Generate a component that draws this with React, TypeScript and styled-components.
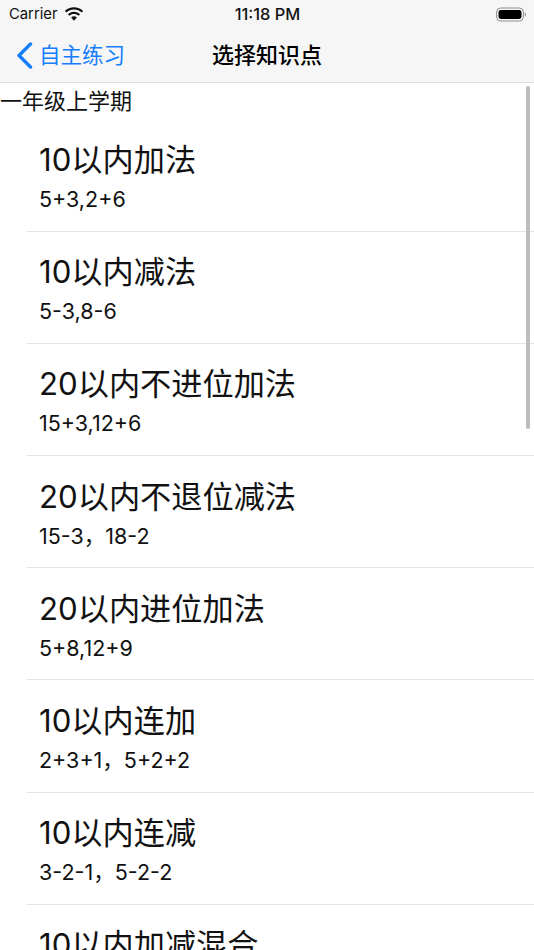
import React from "react";
import styled, { createGlobalStyle } from "styled-components";

const Global = createGlobalStyle`
  html, body { margin: 0; padding: 0; background: #fff; }
  body { font-family: Inter, "Noto Sans CJK SC", sans-serif; color: #000; }
`;
const Screen = styled.div`
  position: relative;
  width: 534px;
  height: 950px;
  overflow: hidden;
  background: #fff;
`;
const Header = styled.header`
  height: 83px;
  box-sizing: border-box;
  background: #f6f6f6;
  border-bottom: 1px solid #dfdfdf;
`;
const StatusBar = styled.div`
  height: 28px;
  padding: 0 8px 0 9px;
  display: grid;
  grid-template-columns: 1fr auto 1fr;
  align-items: center;
  font-size: 14.8px;
  color: #111;
`;
const Carrier = styled.div`
  display: flex;
  align-items: center;
  gap: 6px;
`;
const Time = styled.div`
  font-size: 16.4px;
  font-weight: 500;
`;
const BatteryWrap = styled.div`
  justify-self: end;
  display: flex;
`;
const NavBar = styled.div`
  position: relative;
  height: 54px;
  display: flex;
  align-items: center;
  justify-content: center;
`;
const Back = styled.div`
  position: absolute;
  left: 16px;
  top: 12px;
  display: flex;
  align-items: center;
  gap: 6px;
  color: #157efb;
  font-size: 21.5px;
  line-height: 30px;
`;
const NavTitle = styled.div`
  font-size: 22px;
  font-weight: 500;
  line-height: 30px;
`;
const Section = styled.div`
  height: 36.500px;
  font-size: 22px;
  line-height: 37px;
  color: #111;
`;
const List = styled.div`
  display: flex;
  flex-direction: column;
`;
const Row = styled.div`
  height: 112.2px;
  box-sizing: border-box;
  margin-left: 27px;
  padding: 18.5px 0 0 13px;
  border-bottom: 1px solid #e4e4e4;
  flex: none;
`;
const RowTitle = styled.div`
  font-size: 31.2px;
  line-height: 44px;
  margin-left: -1px;
  color: #111;
`;
const RowSub = styled.div`
  font-size: 21.5px;
  line-height: 30px;
  margin: 2px 0 0 -1px;
  color: #111;
`;
const ScrollThumb = styled.div`
  position: absolute;
  left: 526px;
  top: 86px;
  width: 4px;
  height: 343px;
  border-radius: 2px;
  background: #bcbcbc;
`;

const items: [string, string][] = [
  ["10以内加法", "5+3,2+6"],
  ["10以内减法", "5-3,8-6"],
  ["20以内不进位加法", "15+3,12+6"],
  ["20以内不退位减法", "15-3，18-2"],
  ["20以内进位加法", "5+8,12+9"],
  ["10以内连加", "2+3+1，5+2+2"],
  ["10以内连减", "3-2-1，5-2-2"],
  ["10以内加减混合", "5-2+3，4+3-2"],
];

export default function App() {
  return (
    <Screen>
      <Global />
      <Header>
        <StatusBar>
          <Carrier>
            Carrier
            <svg width="20" height="15" viewBox="0 0 18 13.500">
              <path d="M9 2.200c2.700 0 5.100 1 6.900 2.700l1.300-1.400C15 1.400 12.100.2 9 .2S3 1.400.8 3.500l1.300 1.400C3.900 3.200 6.300 2.200 9 2.200z" fill="#111" />
              <path d="M9 6.300c1.600 0 3 .6 4.100 1.600l1.400-1.400C13 5.100 11.100 4.300 9 4.300s-4 .8-5.500 2.200l1.400 1.400C6 6.900 7.400 6.300 9 6.300z" fill="#111" />
              <path d="M9 8.400c-1 0-1.900.4-2.600 1L9 12.300l2.600-2.900c-.7-.6-1.600-1-2.600-1z" fill="#111" />
            </svg>
          </Carrier>
          <Time>11:18 PM</Time>
          <BatteryWrap>
            <svg width="30" height="15" viewBox="0 0 30 15">
              <rect x="0.600" y="1" width="26.800" height="13" rx="4" fill="none" stroke="#8e8e8e" strokeWidth="1" />
              <rect x="2.500" y="3" width="23" height="9" rx="2.400" fill="#000" />
              <path d="M28.800 5.500c.8.300 1.200 1.100 1.200 2s-.4 1.700-1.200 2z" fill="#8e8e8e" />
            </svg>
          </BatteryWrap>
        </StatusBar>
        <NavBar>
          <Back>
            <svg width="17" height="27" viewBox="0 0 17 27">
              <path d="M14.500 2 3 13.500 14.500 25" fill="none" stroke="#157efb" strokeWidth="3.400" strokeLinecap="round" strokeLinejoin="round" />
            </svg>
            自主练习
          </Back>
          <NavTitle>选择知识点</NavTitle>
        </NavBar>
      </Header>
      <Section>一年级上学期</Section>
      <List>
        {items.map(([title, sub]) => (
          <Row key={title}>
            <RowTitle>{title}</RowTitle>
            <RowSub>{sub}</RowSub>
          </Row>
        ))}
      </List>
      <ScrollThumb />
    </Screen>
  );
}
